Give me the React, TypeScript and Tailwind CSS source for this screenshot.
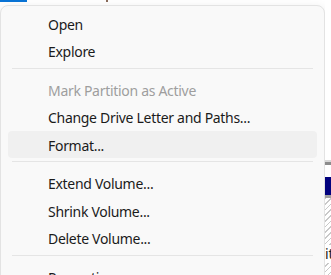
import React from "react";

type Item = { label: string; disabled?: boolean; hover?: boolean } | "sep";

const items: Item[] = [
  { label: "Open" },
  { label: "Explore" },
  "sep",
  { label: "Mark Partition as Active", disabled: true },
  { label: "Change Drive Letter and Paths..." },
  { label: "Format...", hover: true },
  "sep",
  { label: "Extend Volume..." },
  { label: "Shrink Volume..." },
  { label: "Delete Volume..." },
  "sep",
  { label: "Properties" },
];

export default function App() {
  return (
    <div
      className="flex w-[331px] h-[275px] overflow-hidden bg-white"
      style={{ fontFamily: '"Noto Sans", "Open Sans", sans-serif' }}
    >
      {/* left column: top band + menu */}
      <div className="flex flex-col w-[325px] shrink-0">
        <div className="flex h-[5px] shrink-0 items-start">
          <div className="w-[27px] h-[2px] bg-[#0a74d6]" />
          <div className="ml-[79px] w-[2px] h-[2px] bg-[#8a6a5a]" />
        </div>
        <div className="flex flex-col h-[300px] shrink-0 rounded-[8px] border border-[#e3e3e3] bg-[#f9f9f9] shadow-[0_4px_12px_rgba(0,0,0,0.12)] pt-[3.5px] px-[7px]">
          {items.map((it, i) =>
            it === "sep" ? (
              <div key={i} className="h-[11px] shrink-0 flex items-start pt-[3px] px-[4px]">
                <div className="h-px w-full bg-[#e5e5e5]" />
              </div>
            ) : (
              <div
                key={i}
                className={`h-[27.5px] shrink-0 flex items-center pt-[2px] pl-[40px] rounded-[4px] text-[14px] tracking-[-0.3px] ${
                  it.hover ? "bg-[#f0f0f0]" : ""
                } ${it.disabled ? "text-[#9e9e9e]" : "text-[#1b1b1b]"}`}
              >
                {it.label}
              </div>
            )
          )}
        </div>
      </div>

      {/* right strip: fragment of the window behind */}
      <div className="flex flex-col w-[6px] shrink-0 bg-white">
        <div className="h-[160px] shrink-0" />
        <div className="h-[2px] shrink-0 bg-[#d8d8d8]" />
        <div className="h-[3px] shrink-0 bg-[#8c8c8c]" />
        <div className="h-[12px] shrink-0" />
        <div className="h-[18px] shrink-0 bg-[#02027e]" />
        <div className="h-[3px] shrink-0 bg-[#a0a0a0]" />
        <div
          className="flex-1 flex flex-col pt-[47px] overflow-hidden"
          style={{
            backgroundImage:
              "repeating-linear-gradient(135deg, #c8c8c8 0px, #c8c8c8 1px, #ffffff 1px, #ffffff 4px)",
          }}
        >
          <span className="text-[14px] leading-[18px] text-[#1a1a1a] bg-white w-[6px] overflow-hidden">it</span>
        </div>
      </div>
    </div>
  );
}
